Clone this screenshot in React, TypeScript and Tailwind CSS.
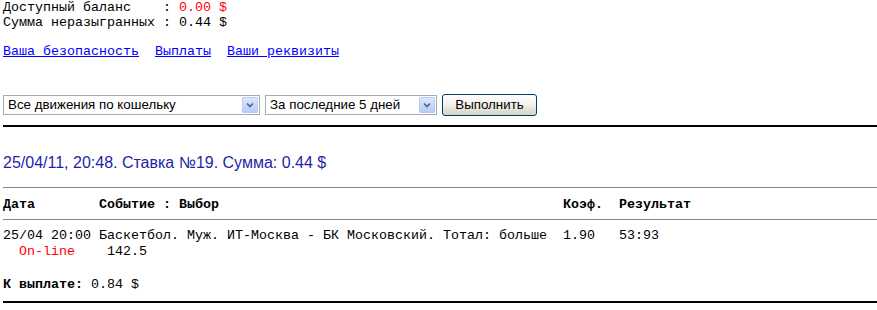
const mono = { fontFamily: '"Liberation Mono", "Courier New", monospace' };

function XpSelect({ label, width }: { label: string; width: string }) {
    return (
        <div
            className={`${width} flex h-[20px] items-center border border-[#a5acb2] bg-white`}
        >
            <span className="flex-1 truncate pl-[4px] font-['Liberation_Sans',Arial,sans-serif] text-[13.33px] leading-none text-black">
                {label}
            </span>
            <span className="m-[1px] flex h-[16px] w-[16px] items-center justify-center rounded-[1px] border border-[#b9cbf3] bg-gradient-to-b from-[#dde7fd] to-[#b7cbf6]">
                <svg width="8" height="6" viewBox="0 0 8 6">
                    <path d="M1 1.5 L4 4.5 L7 1.5" fill="none" stroke="#4d6185" strokeWidth="1.6" />
                </svg>
            </span>
        </div>
    );
}

export default function App() {
    return (
        <div
            className="bg-white pl-[3px] text-[13.33px] leading-[15px] text-black"
            style={mono}
        >
            <div className="whitespace-pre">
                {'Доступный баланс    : '}
                <span className="text-[#ff0000]">0.00 $</span>
            </div>
            <div className="whitespace-pre">Сумма неразыгранных : 0.44 $</div>

            <div className="mt-[14px] whitespace-pre text-[#0000ff]">
                <a className="underline">Ваша безопасность</a>
                {'  '}
                <a className="underline">Выплаты</a>
                {'  '}
                <a className="underline">Ваши реквизиты</a>
            </div>

            <div className="mt-[35px] flex items-center gap-[5px]">
                <XpSelect label="Все движения по кошельку" width="w-[257px]" />
                <XpSelect label="За последние 5 дней" width="w-[172px]" />
                <button className="h-[22px] w-[95px] rounded-[3px] border border-[#003c74] bg-gradient-to-b from-white via-[#f2f1ea] to-[#d6d0c3] font-['Liberation_Sans',Arial,sans-serif] text-[13.33px] leading-none text-black">
                    Выполнить
                </button>
            </div>

            <div className="mt-[9px] h-[2px] bg-black" />

            <div className="mt-[27px] font-['Liberation_Sans',Arial,sans-serif] text-[16px] leading-[18px] text-[#1f1faa]">
                25/04/11, 20:48. Ставка №19. Сумма: 0.44 $
            </div>

            <div className="mt-[15px] h-px bg-[#888888]" />

            <div className="mt-[9px] flex whitespace-pre font-bold">
                <div className="w-[96px]">Дата</div>
                <div className="w-[464px]">Событие : Выбор</div>
                <div className="w-[56px]">Коэф.</div>
                <div>Результат</div>
            </div>

            <div className="mt-[7px] h-px bg-[#888888]" />

            <div className="mt-[8px] flex whitespace-pre leading-[16px]">
                <div className="w-[96px]">
                    <div>25/04 20:00</div>
                    <div className="text-[#ff0000]">{'  On-line'}</div>
                </div>
                <div className="w-[464px]">
                    <div>Баскетбол. Муж. ИТ-Москва - БК Московский. Тотал: больше</div>
                    <div>{' 142.5'}</div>
                </div>
                <div className="w-[56px]">1.90</div>
                <div>53:93</div>
            </div>

            <div className="mt-[17px] whitespace-pre">
                <span className="font-bold">К выплате:</span> 0.84 $
            </div>

            <div className="mt-[9px] h-[2px] bg-black" />
        </div>
    );
}
